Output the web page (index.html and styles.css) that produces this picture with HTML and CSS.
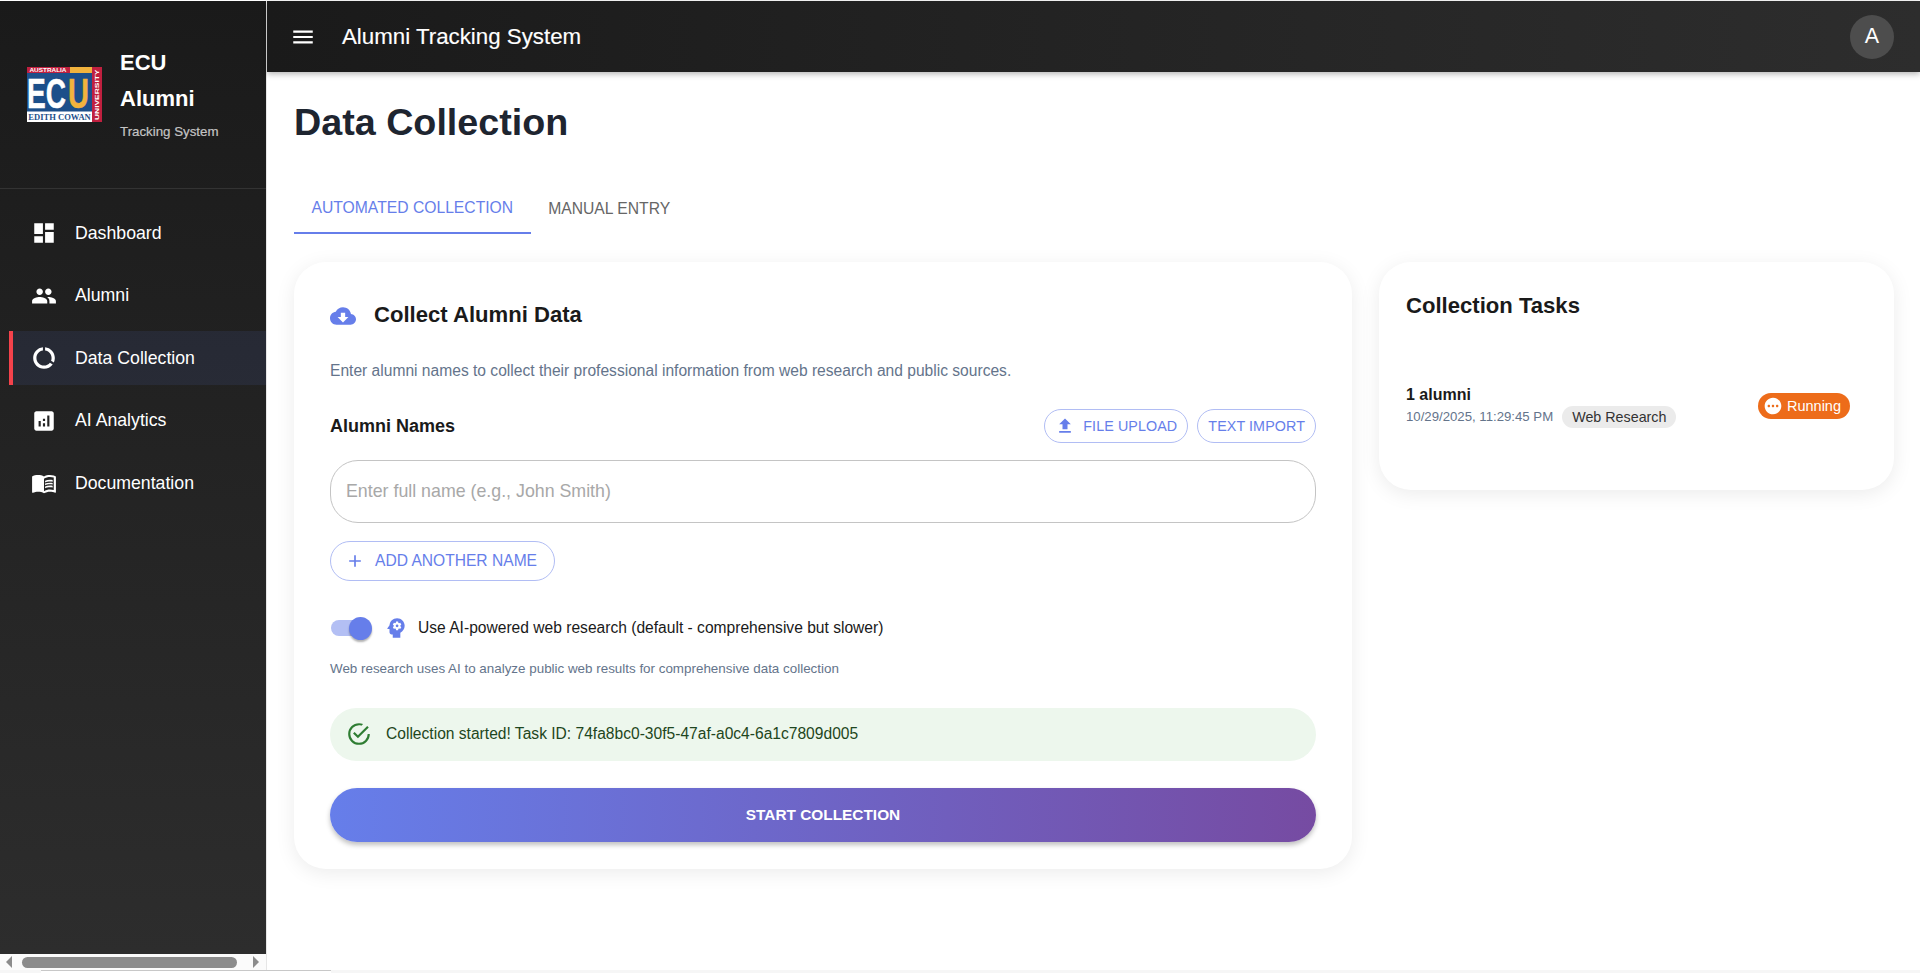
FILE: index.html
```html
<!DOCTYPE html>
<html lang="en">
<head>
<meta charset="utf-8">
<title>Alumni Tracking System</title>
<link rel="stylesheet" href="styles.css">
</head>
<body>
<div class="app">
  <aside class="sidebar">
    <div class="sidebar-panel">
      <div class="brand">
        <svg class="logo" viewBox="0 0 75 55" width="75" height="55">
          <rect width="75" height="55" fill="#fff"/>
          <rect x="0" y="0" width="43" height="6" fill="#c0203f"/>
          <rect x="43" y="0" width="22" height="6" fill="#f2b33d"/>
          <rect x="65" y="0" width="10" height="55" fill="#c0203f"/>
          <rect x="0" y="6" width="65" height="38.500" fill="#1c4f8a"/>
          <text x="0" y="41" class="logo-big logo-white" textLength="39" lengthAdjust="spacingAndGlyphs">EC</text>
          <text x="41" y="41" class="logo-big logo-yellow" textLength="21" lengthAdjust="spacingAndGlyphs">U</text>
          <text x="2.500" y="4.800" class="logo-small" textLength="37" lengthAdjust="spacingAndGlyphs">AUSTRALIA</text>
          <text x="1.300" y="52.500" class="logo-serif" textLength="62.500" lengthAdjust="spacingAndGlyphs">EDITH COWAN</text>
          <text x="72.300" y="53" class="logo-small" textLength="50.500" lengthAdjust="spacingAndGlyphs" transform="rotate(-90 72.300 53)">UNIVERSITY</text>
        </svg>
        <div class="brand-text">
          <div class="brand-title">ECU</div>
          <div class="brand-title">Alumni</div>
          <div class="brand-sub">Tracking System</div>
        </div>
      </div>
      <nav class="nav">
        <a class="nav-item">
          <svg class="nav-icon" viewBox="0 0 24 24"><path d="M3 13h8V3H3v10zm0 8h8v-6H3v6zm10 0h8V11h-8v10zm0-18v6h8V3h-8z"/></svg>
          <span>Dashboard</span>
        </a>
        <a class="nav-item">
          <svg class="nav-icon" viewBox="0 0 24 24"><path d="M16 11c1.660 0 2.990-1.340 2.990-3S17.660 5 16 5c-1.660 0-3 1.340-3 3s1.340 3 3 3zm-8 0c1.660 0 2.990-1.340 2.990-3S9.660 5 8 5C6.340 5 5 6.340 5 8s1.340 3 3 3zm0 2c-2.330 0-7 1.170-7 3.500V19h14v-2.500c0-2.330-4.670-3.500-7-3.500zm8 0c-.290 0-.620.020-.970.050 1.160.840 1.970 1.970 1.970 3.450V19h6v-2.500c0-2.330-4.670-3.500-7-3.500z"/></svg>
          <span>Alumni</span>
        </a>
        <a class="nav-item active">
          <svg class="nav-icon" viewBox="0 0 24 24"><path d="M13 2.050v3.030c3.390.490 6 3.390 6 6.920 0 .900-.180 1.750-.480 2.540l2.600 1.530c.560-1.240.880-2.620.880-4.070 0-5.180-3.950-9.450-9-9.950zM12 19c-3.870 0-7-3.130-7-7 0-3.530 2.610-6.430 6-6.920V2.050C5.940 2.550 2 6.810 2 12c0 5.520 4.470 10 9.990 10 3.310 0 6.240-1.610 8.060-4.090l-2.600-1.530C16.170 18.020 14.210 19 12 19z"/></svg>
          <span>Data Collection</span>
        </a>
        <a class="nav-item">
          <svg class="nav-icon" viewBox="0 0 24 24"><path d="M19 3H5c-1.100 0-2 .900-2 2v14c0 1.100.900 2 2 2h14c1.100 0 2-.900 2-2V5c0-1.100-.900-2-2-2zM9 17H7v-5h2v5zm4 0h-2v-3h2v3zm0-5h-2v-2h2v2zm4 5h-2V7h2v10z"/></svg>
          <span>AI Analytics</span>
        </a>
        <a class="nav-item">
          <svg class="nav-icon" viewBox="0 0 24 24"><path d="M21 5c-1.110-.350-2.330-.500-3.500-.500-1.950 0-4.050.400-5.500 1.500-1.450-1.100-3.550-1.500-5.500-1.500S2.450 4.900 1 6v14.650c0 .250.250.500.500.500.100 0 .150-.050.250-.050C3.100 20.450 5.050 20 6.500 20c1.950 0 4.050.400 5.500 1.500 1.350-.850 3.800-1.500 5.500-1.500 1.650 0 3.350.300 4.750 1.050.100.050.150.050.250.050.250 0 .500-.250.500-.500V6c-.600-.450-1.250-.750-2-1zm0 13.500c-1.100-.350-2.300-.500-3.500-.500-1.700 0-4.150.650-5.500 1.500V8c1.350-.850 3.800-1.500 5.500-1.500 1.200 0 2.400.150 3.500.500v11.500z"/><path d="M17.500 10.500c.880 0 1.730.090 2.500.260V9.240c-.790-.150-1.640-.240-2.500-.240-1.700 0-3.240.290-4.500.830v1.660c1.130-.640 2.700-.990 4.500-.990zM13 12.490v1.660c1.130-.640 2.700-.990 4.500-.990.880 0 1.730.090 2.500.260V11.900c-.790-.150-1.640-.240-2.500-.240-1.700 0-3.240.300-4.500.830zM17.500 14.330c-1.700 0-3.240.290-4.500.830v1.660c1.130-.640 2.700-.990 4.500-.990.880 0 1.730.090 2.500.260v-1.520c-.790-.160-1.640-.240-2.500-.240z"/></svg>
          <span>Documentation</span>
        </a>
      </nav>
    </div>
    <div class="hscroll">
      <span class="arrow-left"></span>
      <span class="thumb"></span>
      <span class="arrow-right"></span>
    </div>
  </aside>
  <div class="main">
    <header class="appbar">
      <svg class="menu-icon" viewBox="0 0 24 24"><path d="M3 18h18v-2H3v2zm0-5h18v-2H3v2zm0-7v2h18V6H3z"/></svg>
      <div class="appbar-title">Alumni Tracking System</div>
      <div class="avatar">A</div>
    </header>
    <main class="content">
      <h1 class="page-title">Data Collection</h1>
      <div class="tabs">
        <div class="tab tab-active">AUTOMATED COLLECTION</div>
        <div class="tab">MANUAL ENTRY</div>
      </div>
      <div class="columns">
        <section class="card card-form">
          <div class="card-head">
            <svg class="cloud-icon" viewBox="0 0 24 24"><path d="M19.350 10.040C18.670 6.590 15.640 4 12 4 9.110 4 6.600 5.640 5.350 8.040 2.340 8.360 0 10.910 0 14c0 3.310 2.690 6 6 6h13c2.760 0 5-2.240 5-5 0-2.640-2.050-4.780-4.650-4.960zM17 13l-5 5-5-5h3V9h4v4h3z"/></svg>
            <h2 class="card-title">Collect Alumni Data</h2>
          </div>
          <p class="lead">Enter alumni names to collect their professional information from web research and public sources.</p>
          <div class="names-row">
            <div class="names-label">Alumni Names</div>
            <div class="names-actions">
              <button class="pill-small">
                <svg class="upload-icon" viewBox="0 0 24 24"><path d="M9 16h6v-6h4l-7-7-7 7h4zm-4 2h14v2H5z"/></svg>
                FILE UPLOAD
              </button>
              <button class="pill-small">TEXT IMPORT</button>
            </div>
          </div>
          <div class="name-input">Enter full name (e.g., John Smith)</div>
          <button class="add-name">
            <svg class="plus-icon" viewBox="0 0 24 24"><path d="M19 13h-6v6h-2v-6H5v-2h6V5h2v6h6v2z"/></svg>
            ADD ANOTHER NAME
          </button>
          <div class="switch-row">
            <span class="switch"><span class="switch-track"></span><span class="switch-thumb"></span></span>
            <svg class="psych-icon" viewBox="0 0 24 24"><path d="M13 3C9.250 3 6.200 5.870 6.030 9.570L4.100 12.120c-.240.330 0 .800.400.800H6V16c0 1.100.900 2 2 2h1v3h7v-4.680c2.370-1.120 4-3.530 4-6.320 0-3.870-3.130-7-7-7zm3 7c0 .130-.010.260-.030.390l.830.660c.080.060.100.170.050.250l-.800 1.390c-.050.090-.160.120-.240.090l-.990-.400c-.210.160-.430.290-.670.390L14 13.830c-.010.100-.100.170-.200.170h-1.600c-.100 0-.180-.070-.200-.170l-.150-1.060c-.250-.100-.470-.230-.680-.390l-.990.400c-.090.030-.200 0-.250-.090l-.800-1.390c-.050-.080-.030-.190.050-.250l.840-.660c-.020-.130-.020-.260-.020-.390s.020-.270.040-.390l-.850-.660c-.080-.060-.100-.170-.050-.260l.800-1.380c.050-.090.150-.120.240-.090l1 .400c.200-.150.430-.290.670-.390L12 6.170c.020-.100.100-.170.200-.170h1.600c.100 0 .180.070.200.170l.150 1.060c.240.100.460.230.670.390l1-.400c.090-.030.200 0 .240.090l.800 1.380c.050.090.030.200-.050.260l-.850.660c.030.120.040.250.040.390zM13 8.750c-.690 0-1.250.560-1.250 1.250s.560 1.250 1.250 1.250 1.250-.560 1.250-1.250S13.690 8.750 13 8.750z"/></svg>
            <span class="switch-label">Use AI-powered web research (default - comprehensive but slower)</span>
          </div>
          <p class="hint">Web research uses AI to analyze public web results for comprehensive data collection</p>
          <div class="alert">
            <svg class="alert-icon" viewBox="0 0 24 24"><path d="M20 12a8 8 0 0 1-8 8 8 8 0 0 1-8-8 8 8 0 0 1 8-8c.760 0 1.500.110 2.190.310l1.570-1.570A9.800 9.800 0 0 0 12 2 10 10 0 0 0 2 12a10 10 0 0 0 10 10 10 10 0 0 0 10-10M7.910 10.080 6.500 11.500 11 16 21 6l-1.410-1.420L11 13.170l-3.090-3.090z"/></svg>
            <span>Collection started! Task ID: 74fa8bc0-30f5-47af-a0c4-6a1c7809d005</span>
          </div>
          <button class="start">START COLLECTION</button>
        </section>
        <section class="card card-tasks">
          <h2 class="tasks-title">Collection Tasks</h2>
          <div class="task">
            <div class="task-info">
              <div class="task-name">1 alumni</div>
              <div class="task-meta">
                <span class="task-date">10/29/2025, 11:29:45 PM</span>
                <span class="task-chip">Web Research</span>
              </div>
            </div>
            <div class="status">
              <svg class="status-icon" viewBox="0 0 24 24"><path d="M12 2C6.480 2 2 6.480 2 12s4.480 10 10 10 10-4.480 10-10S17.520 2 12 2zM7 13.500c-.830 0-1.500-.670-1.500-1.500s.670-1.500 1.500-1.500 1.500.670 1.500 1.500-.670 1.500-1.500 1.500zm5 0c-.830 0-1.500-.670-1.500-1.500s.670-1.500 1.500-1.500 1.500.670 1.500 1.500-.670 1.500-1.500 1.500zm5 0c-.830 0-1.500-.670-1.500-1.500s.670-1.500 1.500-1.500 1.500.670 1.500 1.500-.670 1.500-1.500 1.500z"/></svg>
              Running
            </div>
          </div>
        </section>
      </div>
    </main>
  </div>
</div>
<div class="page-strip"><span class="page-thumb"></span></div>
</body>
</html>
```
FILE: styles.css
```css
* { box-sizing: border-box; }
html, body { margin: 0; height: 100%; overflow: hidden; }
body {
  background: #fff;
  font-family: "Liberation Sans", Arial, sans-serif;
  color: #1a1a1a;
}
.app {
  display: flex;
  height: 970px;
  padding-top: 1px;
  background: #fff;
}
.page-strip {
  height: 3px;
  background: #f6f6f6;
  padding-left: 41px;
  display: flex;
}
.page-thumb {
  width: 290px;
  height: 3px;
  background: #fff;
  border-top: 1px solid #c8c8c8;
  flex: none;
}
.sidebar {
  width: 267px;
  flex: none;
  display: flex;
  flex-direction: column;
  border-right: 1px solid #e6e6e6;
  height: 969px;
}
.sidebar-panel {
  height: 953px;
  flex: none;
  background: linear-gradient(180deg, #1a1a1a 0%, #2d2d2d 100%);
  color: #fff;
  overflow: hidden;
}
.brand {
  height: 188px;
  display: flex;
  align-items: flex-start;
  padding: 44px 0 0 27px;
  border-bottom: 1px solid #333;
  gap: 18px;
}
.logo { flex: none; margin-top: 22px; }
.logo-big { font: 700 42.500px "Liberation Sans", sans-serif; stroke-width: .5px; }
.logo-white { fill: #fff; stroke: #fff; }
.logo-yellow { fill: #f2b33d; stroke: #f2b33d; }
.logo-small { font: 700 5.500px "Liberation Sans", sans-serif; fill: #fff; }
.logo-serif { font: 700 7.500px "Liberation Serif", serif; fill: #1c4f8a; }
.brand-text { display: flex; flex-direction: column; }
.brand-title { font-size: 22px; font-weight: 700; line-height: 35.500px; color: #fff; }
.brand-sub { font-size: 13.300px; line-height: 20px; color: #c4c4c4; margin-top: 6px; font-weight: 500; -webkit-text-stroke: .2px #c4c4c4; }
.nav { display: flex; flex-direction: column; padding: 0 0 0 9px; }
.nav-item {
  height: 54px;
  margin-top: 8.500px;
  display: flex;
  align-items: center;
  padding-left: 22px;
  gap: 18px;
  font-size: 17.700px;
  color: #fff;
}
.nav-item:first-child { margin-top: 17px; }
.nav-item.active {
  background: rgba(102, 126, 234, .1);
  box-shadow: inset 4px 0 0 #f4424b;
}
.nav-icon { width: 26px; height: 26px; fill: #fff; flex: none; }
.hscroll {
  height: 16px;
  flex: none;
  display: flex;
  align-items: center;
  background: #fbfbfb;
  padding: 0 4px 0 6px;
}
.thumb { width: 215px; height: 11px; border-radius: 6px; background: #8c8c8c; margin: 0 16px 0 10px; flex: none; }
.arrow-left { width: 0; height: 0; border: 6px solid transparent; border-right: 6px solid #8c8c8c; border-left: 0; }
.arrow-right { width: 0; height: 0; border: 6px solid transparent; border-left: 6px solid #8c8c8c; border-right: 0; }
.main { flex: 1; min-width: 0; display: flex; flex-direction: column; }
.appbar {
  height: 71px;
  flex: none;
  background: linear-gradient(90deg, #1a1a1a 0%, #2d2d2d 100%);
  box-shadow: 0 2px 6px rgba(0, 0, 0, .3);
  display: flex;
  align-items: center;
  padding: 0 26px 0 23px;
  color: #fff;
}
.menu-icon { width: 26px; height: 26px; fill: #fff; flex: none; margin-right: 26px; }
.appbar-title { font-size: 22.300px; font-weight: 500; flex: 1; -webkit-text-stroke: .15px #fff; }
.avatar {
  width: 44px;
  height: 44px;
  border-radius: 50%;
  background: #4d4d4d;
  display: flex;
  align-items: center;
  justify-content: center;
  font-size: 21.500px;
  color: #fff;
}
.content { padding: 0 26px 0 27px; flex: 1; }
.page-title { font-size: 37.700px; font-weight: 700; line-height: 44px; margin: 28px 0 0; color: #1e2530; }
.tabs { display: flex; margin-top: 39px; height: 51px; }
.tab {
  padding: 0 17.500px;
  display: flex;
  align-items: center;
  font-size: 15.700px;
  color: #666;
  height: 51px;
}
.tab-active { color: #667eea; border-bottom: 2px solid #667eea; }
.columns { display: flex; gap: 27px; align-items: flex-start; margin-top: 28px; }
.card {
  background: #fff;
  border-radius: 32px;
  box-shadow: 0 4px 20px rgba(0, 0, 0, .08);
}
.card-form { width: 1058px; height: 607px; padding: 36px 36px 0; flex: none; }
.card-tasks { width: 515px; height: 228px; padding: 31px 17px 0 27px; flex: none; }
.card-head { display: flex; align-items: center; gap: 18px; height: 34px; }
.cloud-icon { width: 26px; height: 26px; fill: #667eea; flex: none; margin-top: 2px; }
.card-title { font-size: 22.100px; font-weight: 700; margin: 0; color: #1a1a1a; }
.lead { font-size: 15.600px; line-height: 24px; color: #64748b; margin: 27px 0 0; }
.names-row { display: flex; justify-content: space-between; align-items: center; margin-top: 26px; height: 34px; }
.names-label { font-size: 18px; font-weight: 700; color: #1a1a1a; }
.names-actions { display: flex; gap: 9px; }
button { font-family: inherit; cursor: pointer; background: none; }
.pill-small {
  height: 34px;
  padding: 0 10px;
  border: 1px solid #b1bdf4;
  border-radius: 17px;
  color: #667eea;
  font-size: 14.300px;
  display: flex;
  align-items: center;
  gap: 8px;
  letter-spacing: .1px;
}
.upload-icon { width: 20px; height: 20px; fill: #667eea; flex: none; }
.name-input {
  margin-top: 17px;
  height: 63px;
  border: 1px solid #c4c4c4;
  border-radius: 28px;
  display: flex;
  align-items: center;
  padding-left: 15px;
  font-size: 17.800px;
  color: #a8a8a8;
}
.add-name {
  margin-top: 18px;
  height: 40px;
  border: 1px solid #b1bdf4;
  border-radius: 20px;
  color: #667eea;
  font-size: 15.600px;
  padding: 0 17px 0 14px;
  display: flex;
  align-items: center;
  gap: 10px;
}
.plus-icon { width: 20px; height: 20px; fill: #667eea; flex: none; }
.switch-row { display: flex; align-items: center; margin-top: 28px; height: 38px; }
.switch { display: flex; align-items: center; width: 42px; height: 24px; flex: none; padding-left: 1px; }
.switch-track { width: 37px; height: 16px; border-radius: 8px; background: #b3bff4; flex: none; }
.switch-thumb { width: 23px; height: 23px; border-radius: 50%; background: #667eea; margin-left: -19px; flex: none; box-shadow: 0 2px 2px rgba(0, 0, 0, .3); }
.psych-icon { width: 26px; height: 26px; fill: #667eea; margin-left: 11px; flex: none; }
.switch-label { font-size: 15.600px; margin-left: 9px; color: #1a1a1a; }
.hint { font-size: 13.400px; color: #64748b; margin: 13px 0 0; line-height: 17px; }
.alert {
  margin-top: 30.500px;
  height: 53px;
  background: #edf7ed;
  border-radius: 27px;
  display: flex;
  align-items: center;
  padding-left: 16px;
  gap: 14px;
  font-size: 15.600px;
  color: #1e4620;
}
.alert-icon { width: 26px; height: 26px; fill: #2e7d32; flex: none; }
.start {
  margin-top: 27px;
  width: 100%;
  height: 54px;
  border: 0;
  border-radius: 27px;
  background: linear-gradient(90deg, #667eea 0%, #764ba2 100%);
  color: #fff;
  font-size: 15.400px;
  font-weight: 700;
  box-shadow: 0 3px 5px rgba(0, 0, 0, .25);
}
.tasks-title { font-size: 22.100px; font-weight: 700; margin: 0; line-height: 26px; color: #1a1a1a; }
.task { display: flex; justify-content: space-between; align-items: center; margin-top: 65.500px; padding-right: 27px; }
.task-name { font-size: 16px; font-weight: 700; line-height: 20px; }
.task-meta { display: flex; align-items: center; gap: 9px; margin-top: 1px; }
.task-date { font-size: 13.200px; color: #64748b; }
.task-chip { height: 22px; border-radius: 11px; background: #ebebeb; padding: 0 10px; font-size: 14.300px; display: flex; align-items: center; color: #333; }
.status {
  height: 26px;
  border-radius: 13px;
  background: #ed6c1a;
  color: #fff;
  font-size: 14.500px;
  display: flex;
  align-items: center;
  padding: 0 9px 0 5px;
  gap: 4px;
}
.status-icon { width: 20px; height: 20px; fill: #fff; flex: none; }
```
